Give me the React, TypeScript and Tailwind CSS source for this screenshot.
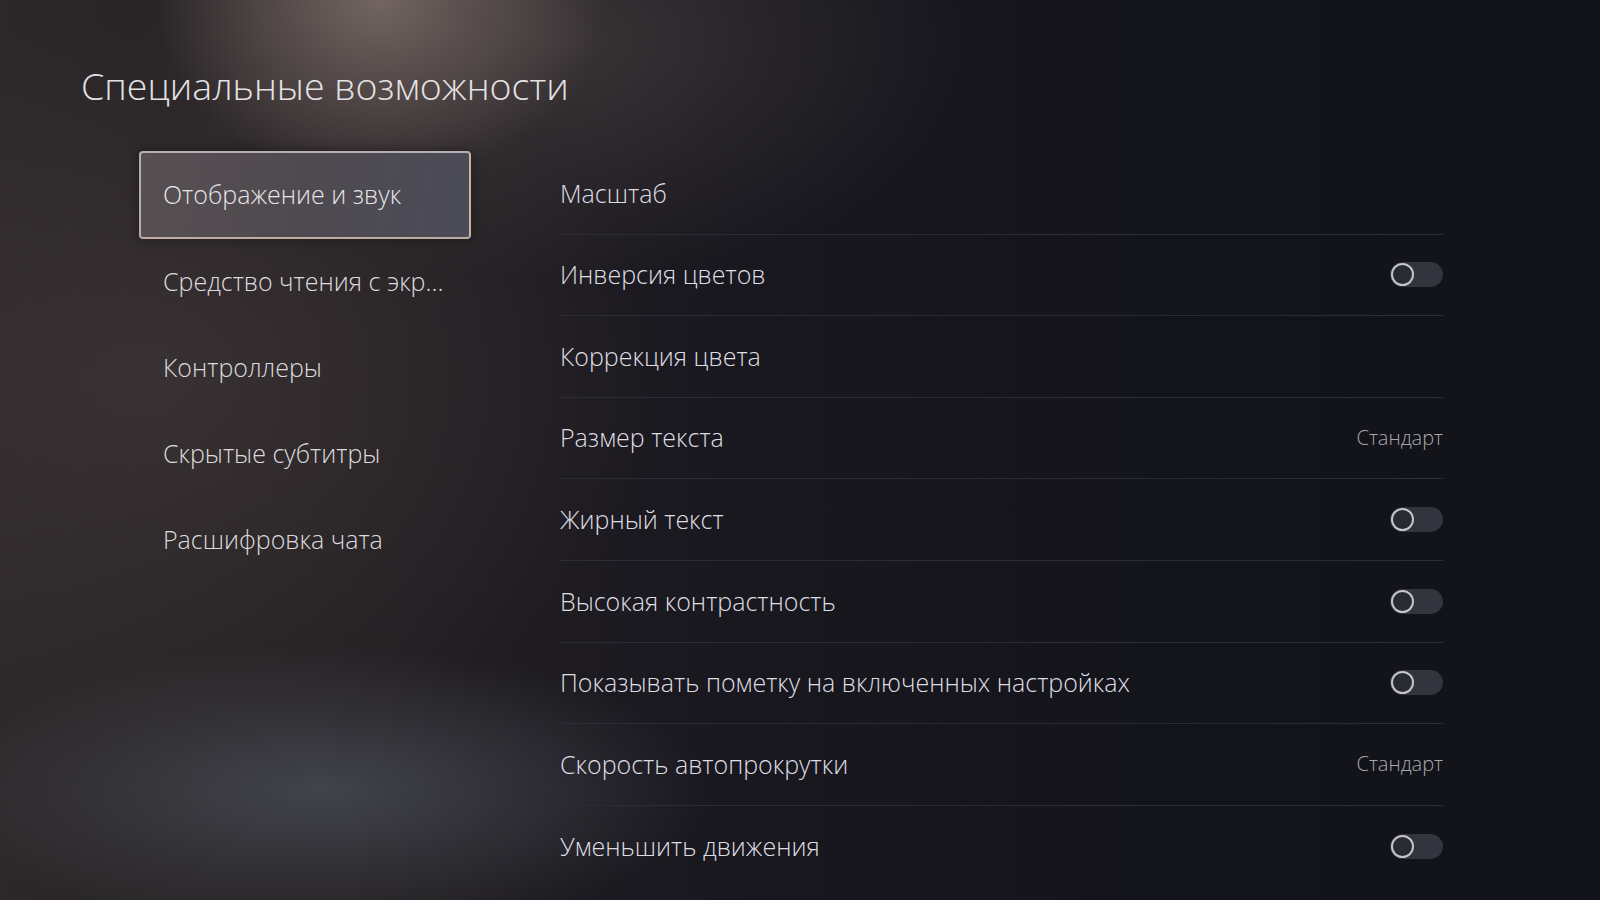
import React from 'react'

const menu = [
  'Отображение и звук',
  'Средство чтения с экр...',
  'Контроллеры',
  'Скрытые субтитры',
  'Расшифровка чата',
]

type Row = { label: string; kind?: 'toggle' | 'value'; value?: string }

const rows: Row[] = [
  { label: 'Масштаб' },
  { label: 'Инверсия цветов', kind: 'toggle' },
  { label: 'Коррекция цвета' },
  { label: 'Размер текста', kind: 'value', value: 'Стандарт' },
  { label: 'Жирный текст', kind: 'toggle' },
  { label: 'Высокая контрастность', kind: 'toggle' },
  { label: 'Показывать пометку на включенных настройках', kind: 'toggle' },
  { label: 'Скорость автопрокрутки', kind: 'value', value: 'Стандарт' },
  { label: 'Уменьшить движения', kind: 'toggle' },
]

function Toggle() {
  return (
    <div className="relative h-[25px] w-[53px] rounded-full bg-[#34343e]">
      <div className="absolute left-[1px] top-[1px] h-[23px] w-[23px] rounded-full border-2 border-[#c4c4cc] bg-[#2a2a33]" />
    </div>
  )
}

export default function App() {
  return (
    <div
      className="relative h-[900px] w-[1600px] overflow-hidden text-[#dedee2]"
      style={{ fontFamily: '"Open Sans", "Noto Sans", sans-serif' }}
    >
      {/* background glows */}
      <div className="absolute inset-0 bg-[linear-gradient(90deg,#2c2729_0%,#231f23_25%,#19181f_45%,#14141b_70%,#121219_100%)]" />
      <div className="absolute inset-0 bg-[radial-gradient(ellipse_720px_520px_at_160px_380px,rgba(70,60,60,0.55),transparent_70%)]" />
      <div className="absolute inset-0 bg-[radial-gradient(ellipse_300px_240px_at_380px_0px,rgba(150,132,124,0.7),transparent_75%)]" />
      <div className="absolute inset-0 bg-[radial-gradient(ellipse_560px_320px_at_560px_40px,rgba(110,96,92,0.35),transparent_75%)]" />
      <div className="absolute inset-0 bg-[radial-gradient(ellipse_520px_190px_at_320px_790px,rgba(78,82,92,0.7),transparent_75%)]" />

      <div className="relative flex h-full flex-col">
        {/* Title */}
        <h1 className="pl-[81px] pt-[62px] text-[37.5px] font-light leading-[48px] text-[#e4e2e4]">
          Специальные возможности
        </h1>

        <div className="mt-[41px] flex">
          {/* Left menu */}
          <div className="ml-[139px] flex w-[332px] flex-col">
            {menu.map((item, i) => (
              <div
                key={item}
                className={
                  i === 0
                    ? 'flex h-[88px] shrink-0 items-center rounded-[4px] border-2 border-[#b6adb4] border-r-[#c9b49e] border-b-[#bfae9f] bg-[linear-gradient(100deg,#574f52_0%,#4f4a50_50%,#4a4b58_100%)] pl-[22px] text-[25px] font-light text-[#e6e4e6] shadow-[0_0_12px_rgba(0,0,0,0.4)]'
                    : 'flex h-[86px] shrink-0 items-center pl-[24px] text-[25px] font-light text-[#dcdade]'
                }
              >
                {item}
              </div>
            ))}
          </div>

          {/* Right list */}
          <div className="ml-[89px] mt-[2px] flex w-[883px] flex-col">
            {rows.map((r, i) => (
              <div
                key={r.label}
                className={
                  i === rows.length - 1
                    ? 'flex h-[81.6px] shrink-0 items-center justify-between'
                    : 'flex h-[81.6px] shrink-0 items-center justify-between border-b border-[#2c2c35]'
                }
              >
                <span className="text-[25px] font-light text-[#dedde2]">{r.label}</span>
                {r.kind === 'toggle' && <Toggle />}
                {r.kind === 'value' && (
                  <span className="text-[20px] font-light text-[#a9a8b0]">{r.value}</span>
                )}
              </div>
            ))}
          </div>
        </div>
      </div>
    </div>
  )
}
